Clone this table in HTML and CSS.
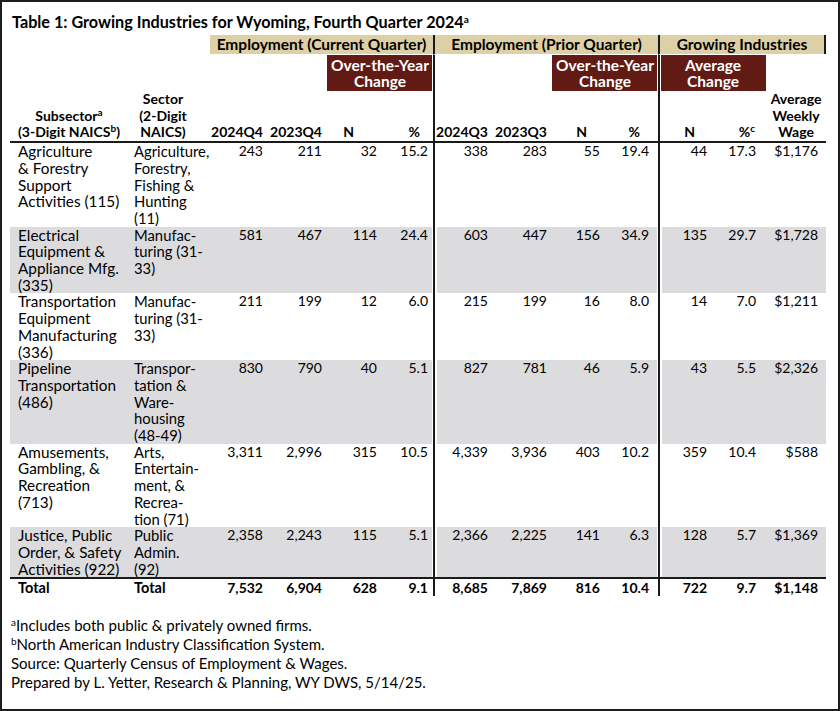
FILE: index.html
```html
<!DOCTYPE html>
<html lang="en">
<head>
<meta charset="utf-8">
<title>Table 1: Growing Industries for Wyoming</title>
<link rel="stylesheet" href="styles.css">
</head>
<body>
<div class="frame">
  <div class="title">Table 1: Growing Industries for Wyoming, Fourth Quarter 2024<sup>a</sup></div>
  <table class="tbl">
    <colgroup>
      <col class="c1"><col class="c2"><col class="c3"><col class="c4"><col class="c5"><col class="c6"><col class="c7"><col class="c8"><col class="c9"><col class="c10"><col class="c11"><col class="c12"><col class="c13">
    </colgroup>
    <thead>
      <tr class="band">
        <th colspan="2" class="blank"></th>
        <th colspan="4" class="tan">Employment (Current Quarter)</th>
        <th colspan="4" class="tan vl">Employment (Prior Quarter)</th>
        <th colspan="3" class="tan vl endbar">Growing Industries</th>
      </tr>
      <tr class="boxes">
        <th colspan="4"></th>
        <th colspan="2" class="dark gapr">Over-the-Year<br>Change</th>
        <th colspan="2" class="vl"></th>
        <th colspan="2" class="dark gapr">Over-the-Year<br>Change</th>
        <th colspan="2" class="dark vl gapl">Average<br>Change</th>
        <th></th>
      </tr>
      <tr class="cols">
        <th class="h-sub">Subsector<sup>a</sup><br>(3-Digit NAICS<sup>b</sup>)</th>
        <th class="h-sec">Sector<br>(2-Digit<br>NAICS)</th>
        <th class="r p7">2024Q4</th>
        <th class="r p5">2023Q4</th>
        <th class="r hN1">N</th>
        <th class="r hP1">%</th>
        <th class="r p5 vl">2024Q3</th>
        <th class="r p5">2023Q3</th>
        <th class="r hN2">N</th>
        <th class="r hP2">%</th>
        <th class="r hN3 vl">N</th>
        <th class="r hP3">%<sup>c</sup></th>
        <th class="h-wage">Average<br>Weekly<br>Wage</th>
      </tr>
    </thead>
    <tbody>
      <tr>
        <td class="sub">Agriculture<br>&amp; Forestry<br>Support<br>Activities (115)</td>
        <td class="sec">Agriculture,<br>Forestry,<br>Fishing &amp;<br>Hunting<br>(11)</td>
        <td class="n3">243</td><td class="n4">211</td><td class="n5">32</td><td class="n6 pre">15.2</td>
        <td class="n7 vl">338</td><td class="n8">283</td><td class="n9">55</td><td class="n10 pre">19.4</td>
        <td class="n11 vl">44</td><td class="n12">17.3</td><td class="n13">$1,176</td>
      </tr>
      <tr class="g">
        <td class="sub">Electrical<br>Equipment &amp;<br>Appliance Mfg.<br>(335)</td>
        <td class="sec">Manufac-<br>turing (31-<br>33)</td>
        <td class="n3">581</td><td class="n4">467</td><td class="n5">114</td><td class="n6 pre">24.4</td>
        <td class="n7 vl">603</td><td class="n8">447</td><td class="n9">156</td><td class="n10 pre">34.9</td>
        <td class="n11 vl">135</td><td class="n12">29.7</td><td class="n13">$1,728</td>
      </tr>
      <tr>
        <td class="sub">Transportation<br>Equipment<br>Manufacturing<br>(336)</td>
        <td class="sec">Manufac-<br>turing (31-<br>33)</td>
        <td class="n3">211</td><td class="n4">199</td><td class="n5">12</td><td class="n6 pre">6.0</td>
        <td class="n7 vl">215</td><td class="n8">199</td><td class="n9">16</td><td class="n10 pre">8.0</td>
        <td class="n11 vl">14</td><td class="n12">7.0</td><td class="n13">$1,211</td>
      </tr>
      <tr class="g">
        <td class="sub">Pipeline<br>Transportation<br>(486)</td>
        <td class="sec">Transpor-<br>tation &amp;<br>Ware-<br>housing<br>(48-49)</td>
        <td class="n3">830</td><td class="n4">790</td><td class="n5">40</td><td class="n6 pre">5.1</td>
        <td class="n7 vl">827</td><td class="n8">781</td><td class="n9">46</td><td class="n10 pre">5.9</td>
        <td class="n11 vl">43</td><td class="n12">5.5</td><td class="n13">$2,326</td>
      </tr>
      <tr>
        <td class="sub">Amusements,<br>Gambling, &amp;<br>Recreation<br>(713)</td>
        <td class="sec">Arts,<br>Entertain-<br>ment, &amp;<br>Recrea-<br>tion (71)</td>
        <td class="n3">3,311</td><td class="n4">2,996</td><td class="n5">315</td><td class="n6 pre">10.5</td>
        <td class="n7 vl">4,339</td><td class="n8">3,936</td><td class="n9">403</td><td class="n10 pre">10.2</td>
        <td class="n11 vl">359</td><td class="n12">10.4</td><td class="n13">$588</td>
      </tr>
      <tr class="g">
        <td class="sub">Justice, Public<br>Order, &amp; Safety<br>Activities (922)</td>
        <td class="sec">Public<br>Admin.<br>(92)</td>
        <td class="n3">2,358</td><td class="n4">2,243</td><td class="n5">115</td><td class="n6 pre">5.1</td>
        <td class="n7 vl">2,366</td><td class="n8">2,225</td><td class="n9">141</td><td class="n10 pre">6.3</td>
        <td class="n11 vl">128</td><td class="n12">5.7</td><td class="n13">$1,369</td>
      </tr>
      <tr class="total">
        <td class="sub">Total</td>
        <td class="sec">Total</td>
        <td class="n3">7,532</td><td class="n4">6,904</td><td class="n5">628</td><td class="n6">9.1</td>
        <td class="n7 vl">8,685</td><td class="n8">7,869</td><td class="n9">816</td><td class="n10">10.4</td>
        <td class="n11 vl">722</td><td class="n12">9.7</td><td class="n13">$1,148</td>
      </tr>
    </tbody>
  </table>
  <div class="notes">
    <p><sup>a</sup>Includes both public &amp; privately owned firms.</p>
    <p><sup>b</sup>North American Industry Classification System.</p>
    <p>Source: Quarterly Census of Employment &amp; Wages.</p>
    <p>Prepared by L. Yetter, Research &amp; Planning, WY DWS, 5/14/25.</p>
  </div>
</div>
</body>
</html>
```
FILE: styles.css
```css
html, body {
  margin: 0;
  padding: 0;
  background: #fff;
}

.frame {
  width: 840px;
  height: 711px;
  box-sizing: border-box;
  border: 2px solid #1e1e1e;
  padding: 10px 12px 0 8px;
  font-family: Lato, "Open Sans", sans-serif;
  color: #000;
  overflow: hidden;
}

sup {
  font-size: 10px;
  line-height: 0;
  vertical-align: 0.5em;
}

.title {
  font-weight: bold;
  font-size: 16.2px;
  line-height: 20px;
  padding-left: 2px;
  white-space: nowrap;
}

.tbl {
  margin-top: 3px;
  width: 816px;
  table-layout: fixed;
  border-collapse: separate;
  border-spacing: 0;
  font-size: 14px;
}

.c1 { width: 118px; }
.c2 { width: 82px; }
.c3 { width: 60px; }
.c4 { width: 57px; }
.c5 { width: 56px; }
.c6 { width: 50px; }
.c7 { width: 60px; }
.c8 { width: 59px; }
.c9 { width: 55px; }
.c10 { width: 51px; }
.c11 { width: 55px; }
.c12 { width: 53px; }
.c13 { width: 60px; }

.tbl th, .tbl td {
  padding: 0;
  white-space: nowrap;
}

.tbl th {
  font-weight: bold;
}

.vl {
  border-left: 2px solid #1a1a1a;
}

/* top tan band */
.band th {
  height: 19px;
  line-height: 19px;
  font-size: 15.5px;
  text-align: center;
}
.band .tan {
  background: #ddd0a6;
}
.band .endbar {
  border-right: 2px solid #1a1a1a;
}

/* dark red boxes */
.boxes th {
  border-top: 1px solid #fff;
  padding: 1.5px 0;
  line-height: 16.5px;
  font-size: 15.5px;
  text-align: center;
}
.boxes .dark {
  background: #621b14;
  color: #fff;
}
.boxes .gapr {
  box-shadow: inset -1px 0 0 #fff;
}
.boxes .gapl {
  box-shadow: inset 1px 0 0 #fff;
}

/* column headings */
.cols th {
  vertical-align: bottom;
  line-height: 16.7px;
  border-bottom: 2px solid #1a1a1a;
  text-align: center;
}
.cols .r { text-align: right; }
.cols .p7 { padding-right: 7px; }
.cols .p5 { padding-right: 5px; }
.cols .hN1 { padding-right: 29px; }
.cols .hP1 { padding-right: 13px; }
.cols .hN2 { padding-right: 20px; }
.cols .hP2 { padding-right: 18px; }
.cols .hN3 { padding-right: 18px; }
.cols .hP3 { padding-right: 11px; }
.cols .h-sec { padding-right: 12px; }

/* body rows */
.tbl td {
  vertical-align: top;
  line-height: 16.7px;
  text-align: right;
}
.tbl td.sub {
  text-align: left;
  padding-left: 8px;
  font-size: 15.3px;
}
.tbl td.sec {
  text-align: left;
  padding-left: 6px;
  font-size: 14.8px;
}
.n3 { padding-right: 7px !important; }
.n4 { padding-right: 5px !important; }
.n5 { padding-right: 6px !important; }
.n6 { padding-right: 5px !important; }
.n7 { padding-right: 5px !important; }
.n8 { padding-right: 5px !important; }
.n9 { padding-right: 7px !important; }
.n10 { padding-right: 9px !important; }
.n11 { padding-right: 6px !important; }
.n12 { padding-right: 10px !important; }
.n13 { padding-right: 8px !important; }

.g td {
  background: #dcdcdf;
}
.g td.vl {
  box-shadow: inset 2px 0 0 #fff;
}
.g td.pre {
  box-shadow: inset -1px 0 0 #fff;
}

.total td {
  font-weight: bold;
  border-top: 2px solid #1a1a1a;
  line-height: 17px;
}
.tbl .total td.sub,
.tbl .total td.sec {
  font-size: 14.5px;
}

/* footnotes */
.notes {
  margin-top: 20px;
  padding-left: 1px;
  font-size: 15px;
  line-height: 19px;
}
.notes p {
  margin: 0;
  white-space: nowrap;
}
.notes sup {
  font-size: 10px;
}
```
